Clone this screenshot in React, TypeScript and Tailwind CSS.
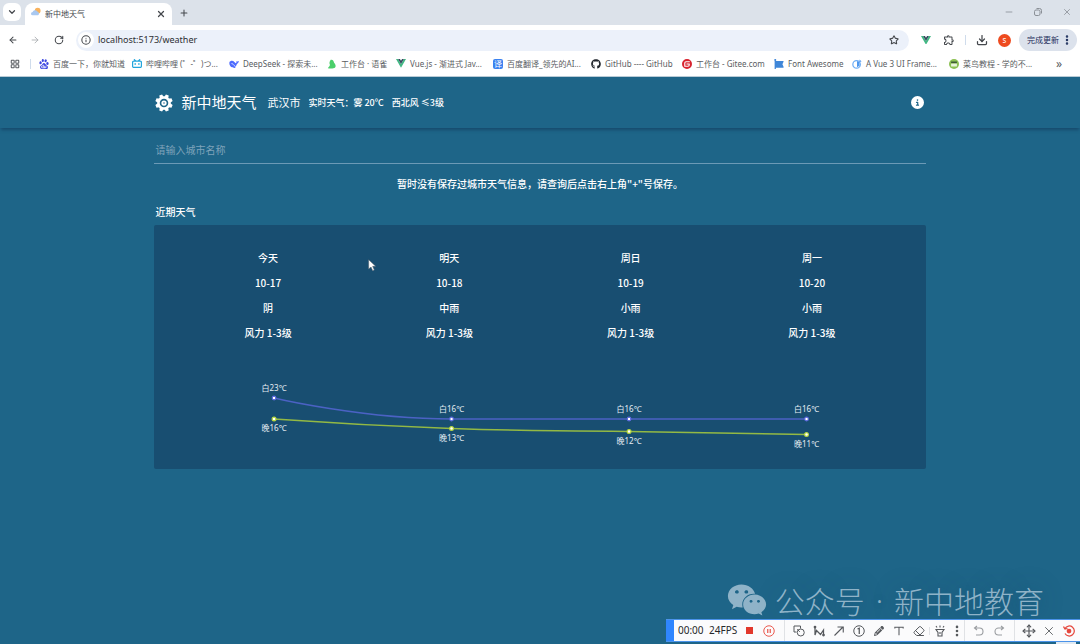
import type { ReactNode } from "react";
import {
  ArrowLeft,
  ArrowRight,
  ChevronDown,
  Download,
  Eraser,
  EllipsisVertical,
  Info,
  LayoutGrid,
  Minus,
  Move,
  Plus,
  RotateCw,
  Star,
  X,
} from "lucide-react";
import { FaBilibili, FaCircleInfo, FaFontAwesome, FaGithub, FaPencil } from "react-icons/fa6";
import { FaWeixin } from "react-icons/fa";
import { MdOutlineExtension } from "react-icons/md";
import { SiBaidu, SiGitee } from "react-icons/si";

function VueLogo({ className }: { className: string }) {
  return (
    <svg viewBox="0 0 24 21" className={className} aria-hidden>
      <path d="M0 0h5l7 12 7-12h5L12 21z" fill="#41b883" />
      <path d="M5 0h4.5L12 4.3 14.500 0H19l-7 12z" fill="#35495e" />
    </svg>
  );
}

function GearLogo() {
  return (
    <svg viewBox="0 0 24 24" className="size-[18px]" aria-hidden>
      <g fill="#fff">
        <circle cx="12" cy="12" r="9" />
        {[22.5, 67.5, 112.5, 157.5].map((angle) => (
          <path key={angle} d="M9.200 4L10 .4h4L14.800 4v16l-.8 3.600h-4L9.200 20z" transform={`rotate(${angle} 12 12)`} />
        ))}
      </g>
      <circle cx="12" cy="12" r="4.600" fill="#fff" stroke="#1e6588" strokeWidth="2.200" />
      <circle cx="12" cy="12" r="1.300" fill="#7fa8bf" />
    </svg>
  );
}

function WeatherFavicon() {
  return (
    <svg viewBox="0 0 24 24" className="mb-1 size-2.5" aria-hidden>
      <circle cx="16" cy="9" r="7" fill="#f9b25c" />
      <path d="M4 20a4 4 0 0 1 0-8 6 6 0 0 1 11-1 5 5 0 0 1 2 9z" fill="#a9c8f0" />
    </svg>
  );
}

function WhaleIcon() {
  return (
    <svg viewBox="0 0 24 24" className="size-2.5" aria-hidden>
      <path
        d="M1 8c2-4 8-5 12-1l3 3c2 0 2-2 2-5 1 1 3 1 6 0-1 4-3 6-5 7-1 4-3 6-5 7l2 2c-3 1-5 0-7-1C4 20 0 15 1 8z"
        fill="#4d6bfe"
      />
      <path d="M6 11c4 0 5 4 8 6" stroke="#fff" strokeWidth="2" fill="none" />
    </svg>
  );
}

function YuqueIcon() {
  return (
    <svg viewBox="0 0 24 24" className="size-2.5" aria-hidden>
      <path d="M9 2c6-1 7 4 8 7 4 4 5 9 2 12-3 2-11 2-17 1 2-3 5-4 5-8-2-4-1-8 2-12z" fill="#4bcf6b" />
    </svg>
  );
}

function NaiveIcon() {
  return (
    <svg viewBox="0 0 24 24" className="size-2.5" aria-hidden>
      <circle cx="11" cy="13" r="9" fill="none" stroke="#6eaef5" strokeWidth="3" />
      <path d="M12 5v15l6-4V8zM18 1l5 5-5 1z" fill="#4d97ee" />
    </svg>
  );
}

function RunoobIcon() {
  return (
    <svg viewBox="0 0 24 24" className="size-2.5" aria-hidden>
      <circle cx="12" cy="12" r="12" fill="#8cc152" />
      <path d="M5 6h14v4H5z" fill="#3f5c37" />
      <path d="M5 11h14v7H5z" fill="#e8f4db" />
    </svg>
  );
}

function TranslateIcon() {
  return (
    <span className="flex size-2.5 items-center justify-center rounded-xs bg-[#3b82f0] text-[8px] leading-none text-white">
      译
    </span>
  );
}

const bookmarks: { label: string; icon: ReactNode; width: string }[] = [
  { label: "百度一下，你就知道", icon: <SiBaidu className="size-2.5 text-[#3c46e0]" />, width: "w-[93px]" },
  { label: "哔哩哔哩 (゜-゜)つ...", icon: <FaBilibili className="size-2.5 text-[#22a5dc]" />, width: "w-[97px]" },
  { label: "DeepSeek - 探索未...", icon: <WhaleIcon />, width: "w-[98px]" },
  { label: "工作台 · 语雀", icon: <YuqueIcon />, width: "w-[69px]" },
  { label: "Vue.js - 渐进式 Jav...", icon: <VueLogo className="w-2.5" />, width: "w-[97px]" },
  { label: "百度翻译_领先的AI...", icon: <TranslateIcon />, width: "w-[98px]" },
  { label: "GitHub ---- GitHub", icon: <FaGithub className="size-2.5 text-[#24292f]" />, width: "w-[91px]" },
  { label: "工作台 - Gitee.com", icon: <SiGitee className="size-2.5 text-[#d8232f]" />, width: "w-[92px]" },
  { label: "Font Awesome", icon: <FaFontAwesome className="size-2.5 text-[#3f86d8]" />, width: "w-[78px]" },
  { label: "A Vue 3 UI Frame...", icon: <NaiveIcon />, width: "w-[97px]" },
  { label: "菜鸟教程 - 学的不...", icon: <RunoobIcon />, width: "w-[93px]" },
];

const forecast = [
  { day: "今天", date: "10-17", weather: "阴", wind: "风力 1-3级" },
  { day: "明天", date: "10-18", weather: "中雨", wind: "风力 1-3级" },
  { day: "周日", date: "10-19", weather: "小雨", wind: "风力 1-3级" },
  { day: "周一", date: "10-20", weather: "小雨", wind: "风力 1-3级" },
];

const points = [
  { x: 97, dayY: 28, nightY: 49, day: 23, night: 16 },
  { x: 274.5, dayY: 49, nightY: 58.5, day: 16, night: 13 },
  { x: 452, dayY: 49, nightY: 61.5, day: 16, night: 12 },
  { x: 629.5, dayY: 49, nightY: 64.5, day: 16, night: 11 },
];

function BrowserChrome() {
  return (
    <div className="bg-white font-['Noto_Sans','Noto_Sans_CJK_SC',sans-serif] text-[#45484d]">
      <div className="flex h-[25px] items-end bg-[#dce2ea] pl-[3px]">
        <button aria-label="搜索标签页" className="mb-1 flex size-[18px] items-center justify-center rounded-md bg-white">
          <ChevronDown className="size-2.5" strokeWidth={3} />
        </button>
        <div className="ml-1 flex h-[22px] w-[147px] items-center gap-1 rounded-t-lg bg-white px-1.5">
          <WeatherFavicon />
          <span className="flex-1 text-[8px]">新中地天气</span>
          <button aria-label="关闭标签页">
            <X className="size-2.5" strokeWidth={3} />
          </button>
        </div>
        <button aria-label="新标签页" className="mb-[7px] ml-[7px]">
          <Plus className="size-2.5" strokeWidth={2.5} />
        </button>
        <div className="mr-2 mb-2 ml-auto flex items-center gap-[19px] text-[#8b9097]">
          <button aria-label="最小化"><Minus className="size-2.5" /></button>
          <button aria-label="还原">
            <svg viewBox="0 0 20 20" className="size-2.5" fill="none" stroke="currentColor" strokeWidth="2">
              <rect x="3" y="6" width="11" height="11" rx="3" />
              <path d="M7 3h6a4 4 0 0 1 4 4v6" />
            </svg>
          </button>
          <button aria-label="关闭"><X className="size-2.5" /></button>
        </div>
      </div>

      <div className="flex h-[30px] items-center pr-[3px] pl-2">
        <button aria-label="后退"><ArrowLeft className="size-2.5" strokeWidth={2.5} /></button>
        <button aria-label="前进" className="ml-3 text-[#a6a9ad]"><ArrowRight className="size-2.5" /></button>
        <button aria-label="刷新" className="ml-3.5"><RotateCw className="size-2.5" strokeWidth={2.5} /></button>
        <div className="ml-3 flex h-[21px] flex-1 items-center rounded-full bg-[#ecf1fa] pr-2.5 pl-0.5">
          <span className="flex size-4 items-center justify-center rounded-full bg-white">
            <Info className="size-2.5" strokeWidth={2.5} />
          </span>
          <input
            aria-label="地址"
            defaultValue="localhost:5173/weather"
            className="ml-1 min-w-0 flex-1 bg-transparent text-[9px] text-[#2c2f33] outline-none"
          />
          <button aria-label="收藏"><Star className="size-2.5" strokeWidth={2.5} /></button>
        </div>
        <VueLogo className="ml-3 w-2.5" />
        <button aria-label="扩展程序" className="ml-3"><MdOutlineExtension className="size-3" /></button>
        <span className="ml-2.5 h-2.5 w-px bg-[#cfdcec]" />
        <button aria-label="下载" className="ml-2.5"><Download className="size-3" strokeWidth={2.5} /></button>
        <span className="ml-2.5 flex size-[13px] items-center justify-center rounded-full bg-[#ee4b1f] text-[8px] leading-none text-white">
          s
        </span>
        <button className="ml-2 flex h-[22px] w-[58px] items-center justify-between rounded-full bg-[#dce2ec] pr-1 pl-2 text-[8px] text-[#1e2f5c]">
          完成更新
          <EllipsisVertical className="size-3" strokeWidth={3} />
        </button>
      </div>

      <nav className="flex h-[22px] items-center border-b border-[#b9cbd6] pb-1 pl-2.5 text-[8px] text-[#5a5d62]">
        <LayoutGrid className="size-2.5" strokeWidth={2.5} />
        <span className="mr-2 ml-2.5 h-2.5 w-px bg-[#cfdcec]" />
        {bookmarks.map((b) => (
          <a key={b.label} href="#" className={`flex shrink-0 items-center gap-1 whitespace-nowrap ${b.width}`}>
            <span className="shrink-0">{b.icon}</span>
            {b.label}
          </a>
        ))}
        <button aria-label="更多书签" className="mr-[18px] ml-auto text-xs leading-none">»</button>
      </nav>
    </div>
  );
}

function Header() {
  return (
    <header className="bg-[#1e6588] shadow-[0_3px_3px_-1px_rgba(20,65,100,0.75)]">
      <div className="mx-auto flex h-[51px] w-[71.4%] items-center pl-px">
        <GearLogo />
        <h1 className="ml-2 text-[15px]">新中地天气</h1>
        <span className="ml-[11px] text-[11px]">武汉市</span>
        <p className="ml-2 flex gap-2 text-[9px] font-medium">
          <span>实时天气：雾 20℃</span>
          <span>西北风 ≤3级</span>
        </p>
        <button aria-label="关于" className="mr-0.5 ml-auto"><FaCircleInfo className="size-[13px]" /></button>
      </div>
    </header>
  );
}

function TemperatureChart() {
  return (
    <svg viewBox="0 0 725 97" className="block w-full" role="img" aria-label="近期气温">
      <path d="M97 28C97 28 186 49 274.5 49S363 49 452 49H629.5" fill="none" stroke="#4b62c4" strokeWidth="1.500" />
      <path
        d="M97 49C97 49 186 55.4 274.5 58.5S363 60 452 61.500L629.5 64.5"
        fill="none"
        stroke="#93b944"
        strokeWidth="1.500"
      />
      {points.map((p) => (
        <g key={p.x} textAnchor="middle" fontSize="8" fill="#e4edf3">
          <circle cx={p.x} cy={p.dayY} r="1.8" fill="#fff" stroke="#5a68dc" strokeWidth="1.200" />
          <circle cx={p.x} cy={p.nightY} r="1.9" fill="#fff" stroke="#b5d63c" strokeWidth="1.200" />
          <text x={p.x} y={p.dayY - 7}>白{p.day}℃</text>
          <text x={p.x} y={p.nightY + 12}>晚{p.night}℃</text>
        </g>
      ))}
    </svg>
  );
}

function Tool({ label, children }: { label: string; children: ReactNode }) {
  return (
    <button aria-label={label} className="flex w-5 shrink-0 items-center justify-center">
      {children}
    </button>
  );
}

function ToolDivider() {
  return <span className="mr-1 ml-[5px] w-px shrink-0 self-stretch bg-[#e0e2e5]" />;
}

function RecorderBar() {
  return (
    <div className="absolute right-0 bottom-0.5 flex h-[23px] w-[414px] items-center border-y border-[#4b93ea] bg-[#fbfbfc] font-['Noto_Sans',sans-serif] text-[#55585c]">
      <span className="w-2 shrink-0 self-stretch bg-[#2f86ff]" />
      <span className="ml-1 w-[31px] shrink-0 text-[10px] text-[#26282b]">00:00</span>
      <span className="w-[30px] shrink-0 text-[10px] text-[#26282b]">24FPS</span>
      <Tool label="停止"><span className="size-[7px] bg-[#e2382c]" /></Tool>
      <Tool label="暂停">
        <svg viewBox="0 0 24 24" className="size-3" fill="none" stroke="#ea5a50" strokeWidth="2">
          <circle cx="12" cy="12" r="10.500" />
          <path d="M9.500 8v8M14.500 8v8" strokeWidth="2.500" />
        </svg>
      </Tool>
      <ToolDivider />
      <Tool label="形状">
        <svg viewBox="0 0 24 24" className="size-3" fill="none" stroke="currentColor" strokeWidth="2">
          <path d="M7 14H2V2h13v5" />
          <circle cx="15.500" cy="15" r="7" />
          <path d="M8.500 8.500l5 5" />
        </svg>
      </Tool>
      <Tool label="折线">
        <svg viewBox="0 0 24 24" className="size-3" fill="none" stroke="currentColor" strokeWidth="2.500">
          <path d="M4 4v16l3-9 8 8 6-9v9" />
          <circle cx="4" cy="4" r="1.500" />
          <circle cx="21" cy="20" r="1.500" />
        </svg>
      </Tool>
      <Tool label="箭头">
        <svg viewBox="0 0 24 24" className="size-3" fill="none" stroke="currentColor" strokeWidth="2.200">
          <path d="M3 21L20 4M9 4h11.500v11" />
        </svg>
      </Tool>
      <Tool label="序号">
        <svg viewBox="0 0 24 24" className="size-3" fill="none" stroke="currentColor" strokeWidth="2">
          <circle cx="12" cy="12" r="10.500" />
          <path d="M9 8l3.500-1.500V18" strokeWidth="2.500" />
        </svg>
      </Tool>
      <Tool label="画笔"><FaPencil className="size-2.5" /></Tool>
      <Tool label="文字">
        <svg viewBox="0 0 24 24" className="size-2.5" fill="none" stroke="currentColor" strokeWidth="2.500">
          <path d="M2 6V3h20v3M12 3v19" />
        </svg>
      </Tool>
      <Tool label="橡皮"><Eraser className="size-3" /></Tool>
      <span className="h-2 w-px bg-[#e0e2e5]" />
      <Tool label="聚光灯">
        <svg viewBox="0 0 24 24" className="size-3" fill="none" stroke="currentColor" strokeWidth="2.200">
          <path d="M4 9h16l-4 6v7H8v-7zM12 14v4M12 1v4M4 2l2 3M20 2l-2 3" />
        </svg>
      </Tool>
      <EllipsisVertical className="size-3.5 shrink-0" strokeWidth={2.5} />
      <span className="mr-1 w-px shrink-0 self-stretch bg-[#e0e2e5]" />
      <span className="flex text-[#9a9da1]">
        <Tool label="撤销">
          <svg viewBox="0 0 24 24" className="size-3" fill="none" stroke="currentColor" strokeWidth="2.200">
            <path d="M8 2L3 6l5 4M3 6h10a7 7 0 0 1 0 14H6" />
          </svg>
        </Tool>
        <Tool label="重做">
          <svg viewBox="0 0 24 24" className="size-3" fill="none" stroke="currentColor" strokeWidth="2.200">
            <path d="M16 2l5 4-5 4M21 6H11a7 7 0 0 0 0 14h7" />
          </svg>
        </Tool>
      </span>
      <ToolDivider />
      <Tool label="移动"><Move className="size-3.5" /></Tool>
      <Tool label="关闭工具栏"><X className="size-3.5" strokeWidth={1.5} /></Tool>
      <Tool label="录制">
        <svg viewBox="0 0 24 24" className="size-3" fill="none" stroke="#e5473d" strokeWidth="2.500">
          <path d="M4 7a10 10 0 1 1 0 10M1 3l3 5 5-1" />
          <circle cx="12" cy="12" r="3.500" fill="#e5473d" />
        </svg>
      </Tool>
    </div>
  );
}

export default function App() {
  return (
    <div className="relative flex min-h-screen flex-col overflow-hidden bg-[#1e6588] font-['Noto_Sans_CJK_SC',sans-serif] text-white">
      <BrowserChrome />
      <Header />

      <main className="mx-auto w-[71.4%] text-[10px] font-medium">
        <input
          aria-label="城市名称"
          placeholder="请输入城市名称"
          className="mt-2 block h-7 w-full border-b border-[#6c9ab6] bg-transparent pl-px font-normal outline-none placeholder:text-[#7fa3ba]"
        />
        <p className="mt-[11px] text-center leading-[18px]">
          暂时没有保存过城市天气信息，请查询后点击右上角"+"号保存。
        </p>
        <h2 className="mt-2.5 pl-px leading-[18px]">近期天气</h2>
        <section className="mt-1 rounded-xs bg-[#184e71] px-[23px] pt-5 pb-0.5">
          <div className="grid grid-cols-4 text-center leading-[25px]">
            {forecast.map((f) => (
              <div key={f.date}>
                <p>{f.day}</p>
                <p>{f.date}</p>
                <p>{f.weather}</p>
                <p>{f.wind}</p>
              </div>
            ))}
          </div>
          <div className="pt-[25px] font-['Noto_Sans','Noto_Sans_CJK_SC',sans-serif] font-normal">
            <TemperatureChart />
          </div>
        </section>
      </main>

      <svg viewBox="0 0 12 18" className="absolute top-[259px] left-[368px] h-3 w-2" aria-hidden>
        <path d="M1 1v14l3.500-3 2.500 5.500 2.500-1L7 11h4.500z" fill="#fff" stroke="#52606b" strokeWidth=".8" />
      </svg>

      <div className="absolute right-9 bottom-6 flex items-center gap-2 text-[#8fb3c8] [text-shadow:0_0_24px_rgba(20,60,90,0.4)]">
        <FaWeixin className="size-10" />
        <p className="flex text-[30px] leading-[38px] font-light whitespace-nowrap">
          公众号<span className="mx-[11px] font-['Noto_Sans']">·</span>新中地教育
        </p>
      </div>
      <RecorderBar />
      <span className="absolute right-1 bottom-0 h-0.5 w-5 bg-[#dfe9f2]" />
    </div>
  );
}
